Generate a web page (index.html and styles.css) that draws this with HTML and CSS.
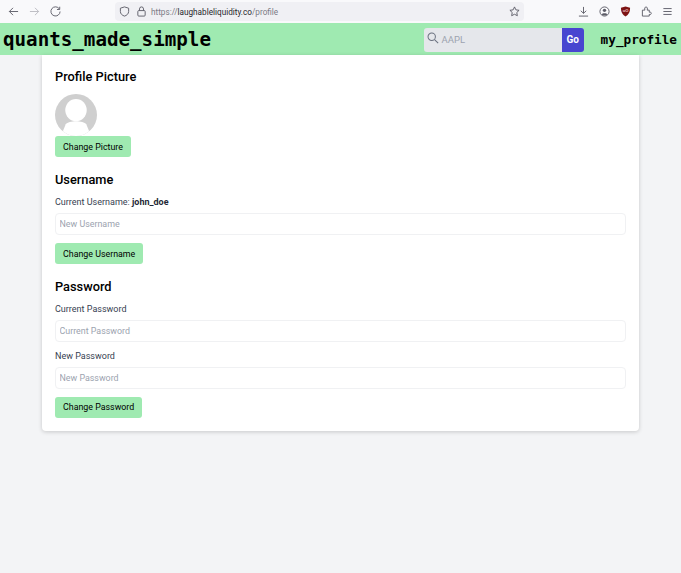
FILE: index.html
```html
<!DOCTYPE html>
<html lang="en">
<head>
<meta charset="utf-8">
<title>Profile</title>
<link rel="stylesheet" href="styles.css">
</head>
<body>
<header class="browser">
  <div class="browser-nav">
    <svg class="ico" viewBox="0 0 12 12"><path d="M11 6H1.5M5.5 2 1.5 6l4 4"/></svg>
    <svg class="ico faded" viewBox="0 0 12 12"><path d="M1 6h9.5M6.5 2l4 4-4 4"/></svg>
    <svg class="ico" viewBox="0 0 12 12"><path d="M10.2 3.2A5 5 0 1 0 11 6M10.6 .8v3h-3"/></svg>
  </div>
  <div class="urlbar">
    <svg class="ico" viewBox="0 0 12 12"><path d="M6 1 10.5 2.4V6C10.5 8.5 8.5 10.300 6 11 3.500 10.300 1.500 8.500 1.500 6V2.400Z"/></svg>
    <svg class="ico" viewBox="0 0 12 12"><rect x="2" y="5" width="8" height="6" rx="1"/><path d="M3.800 5V3.200a2.200 2.200 0 0 1 4.400 0V5"/></svg>
    <span class="url">https://<b>laughableliquidity.co</b>/profile</span>
    <svg class="ico star" viewBox="0 0 12 12"><path d="M6 1 7.500 4.200 11 4.700 8.500 7.100 9.100 10.600 6 9 2.900 10.600 3.500 7.100 1 4.700 4.500 4.200Z"/></svg>
  </div>
  <div class="browser-tools">
    <svg class="ico" viewBox="0 0 12 12"><path d="M6 1v7M3 5.200 6 8l3-2.800M1 11h10"/></svg>
    <svg class="ico" viewBox="0 0 12 12"><circle cx="6" cy="6" r="5"/><circle class="solid" cx="6" cy="4.700" r="1.800"/><path class="solid" d="M2.800 9.200C3.500 7.500 8.500 7.500 9.200 9.200 7.500 10.700 4.500 10.700 2.800 9.200Z"/></svg>
    <svg class="shield" viewBox="0 0 12 12"><path d="M6 .6 11 2c0 4.500-1.500 7.800-5 9.400C2.500 9.800 1 6.500 1 2Z"/><text x="6" y="6.800" text-anchor="middle">uO</text></svg>
    <svg class="ico" viewBox="0 0 12 12"><path d="M1.500 11V4.500H4.200C3.700 2.800 4.200 1 5.500 1S7.300 2.800 6.800 4.500H9V6.800C10.600 6.300 11.200 7.200 11.200 8S10.600 9.700 9 9.200V11Z"/></svg>
    <svg class="ico" viewBox="0 0 12 12"><path d="M1.500 2.800h9M1.500 6h9M1.500 9.200h9"/></svg>
  </div>
</header>

<nav class="topnav">
  <a class="brand">quants_made_simple</a>
  <form class="search">
    <div class="search-field">
      <svg class="search-ico" viewBox="0 0 14 14"><circle cx="5.500" cy="5.500" r="4.300"/><path d="m8.800 8.800 4.200 4.200"/></svg>
      <span>AAPL</span>
    </div>
    <button class="go" type="button">Go</button>
  </form>
  <a class="my-profile">my_profile</a>
</nav>

<main class="card">
  <section class="section">
    <h2>Profile Picture</h2>
    <svg class="avatar" viewBox="0 0 43 43">
      <defs><clipPath id="round"><circle cx="21.500" cy="21.500" r="21.500"/></clipPath></defs>
      <g clip-path="url(#round)">
        <rect width="43" height="43" fill="#cfcfcf"/>
        <ellipse cx="21.500" cy="16.500" rx="11" ry="11.500" fill="#fff"/>
        <path d="M6 43 11 31C14 27 29 27 32 31L37 43Z" fill="#fff"/>
      </g>
    </svg>
    <button class="btn" type="button">Change Picture</button>
  </section>

  <section class="section">
    <h2>Username</h2>
    <p class="label">Current Username: <strong>john_doe</strong></p>
    <input class="field" placeholder="New Username">
    <button class="btn" type="button">Change Username</button>
  </section>

  <section class="section">
    <h2>Password</h2>
    <p class="label">Current Password</p>
    <input class="field" placeholder="Current Password">
    <p class="label">New Password</p>
    <input class="field" placeholder="New Password">
    <button class="btn" type="button">Change Password</button>
  </section>
</main>
</body>
</html>
```
FILE: styles.css
```css
* { box-sizing: border-box; }
html, body { margin: 0; height: 100%; }
body {
  background: #f3f4f6;
  font-family: Roboto, "Liberation Sans", sans-serif;
  color: #000;
  overflow: hidden;
}
.browser {
  height: 23px;
  background: #f9f9fb;
  display: flex;
  align-items: center;
  padding: 0 8px;
}
.ico { width: 11px; height: 11px; fill: none; stroke: #5b5b66; stroke-width: 1; flex: none; }
.ico .solid { fill: #5b5b66; stroke: none; }
.faded { stroke: #b9b9c0; }
.browser-nav { display: flex; gap: 10px; width: 107px; align-items: center; }
.urlbar {
  width: 409px;
  height: 19px;
  background: #f0f0f4;
  border-radius: 4px;
  display: flex;
  align-items: center;
  gap: 6px;
  padding: 0 4px;
}
.url { font-size: 8.200px; color: #7a7a84; margin-left: -2px; white-space: nowrap; }
.url b { font-weight: 400; color: #26262c; }
.star { margin-left: auto; }
.browser-tools {
  display: flex;
  align-items: center;
  gap: 10px;
  margin-left: auto;
}
.shield { width: 11px; height: 11px; }
.shield path { fill: #7d1414; }
.shield text { font: 700 4.500px "Liberation Sans", sans-serif; fill: #f3c5c5; }

.topnav {
  height: 32px;
  background: #9feab1;
  display: flex;
  align-items: center;
  padding: 0 4px 0 3px;
}
.brand {
  font-family: "DejaVu Sans Mono", monospace;
  font-weight: 700;
  font-size: 19.200px;
  color: #000;
  white-space: nowrap;
}
.search { display: flex; margin-left: auto; height: 24px; margin-top: 1px; }
.search-field {
  width: 138px;
  background: #e5e7eb;
  border-radius: 3px 0 0 3px;
  display: flex;
  align-items: center;
  padding-left: 3px;
  gap: 3px;
  font-size: 9.500px;
  color: #9ca3af;
}
.search-ico { width: 12px; height: 12px; fill: none; stroke: #6b7280; stroke-width: 1.200; margin-top: -3px; }
.go {
  width: 22px;
  border: 0;
  padding: 0;
  background: #4846d0;
  color: #fff;
  font: 700 10px Roboto, "Liberation Sans", sans-serif;
  border-radius: 0 3px 3px 0;
}
.my-profile {
  font-family: "DejaVu Sans Mono", monospace;
  font-weight: 700;
  font-size: 12.700px;
  margin-left: 17px;
  white-space: nowrap;
}

.card {
  width: 597px;
  margin-left: 42px;
  height: 376px;
  background: #fff;
  border-radius: 0 0 4px 4px;
  box-shadow: 0 1px 4px rgba(0, 0, 0, .18);
  padding: 14px 13px 13px;
}
.section { display: flex; flex-direction: column; align-items: flex-start; margin-bottom: 14.750px; }
h2 {
  font-size: 12.800px;
  line-height: 16px;
  font-weight: 500;
  margin: 0 0 8.500px;
}
.avatar { width: 42px; height: 42px; margin-top: .5px; }
.label { margin: 0 0 3.750px; font-size: 9px; line-height: 13px; color: #374151; }
.label strong { font-weight: 700; color: #1f2937; }
.field {
  width: 100%;
  height: 22px;
  border: 1px solid #f0f1f3;
  border-radius: 4px;
  padding: 0 3.500px;
  font: 8.900px Roboto, "Liberation Sans", sans-serif;
  margin-bottom: 8px;
  background: #fff;
}
.field::placeholder { color: #9ca3af; }
.btn {
  height: 21px;
  border: 0;
  border-radius: 3px;
  background: #9feab1;
  color: #000;
  font: 400 8.850px Roboto, "Liberation Sans", sans-serif;
  padding: 0 8px;
}
```
